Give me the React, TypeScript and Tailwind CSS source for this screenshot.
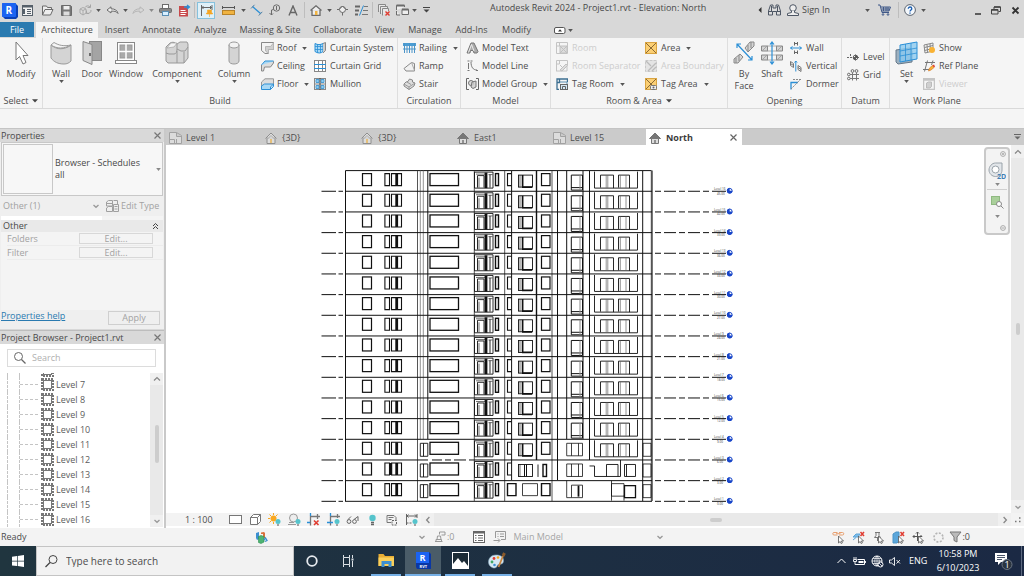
// App.tsx
import type { ReactNode } from "react";
import clsx from "clsx";

/* ---------- helpers ---------- */

const Svg = ({ w, h, children }: { w: number; h: number; children: ReactNode }) => (
  <svg
    width={w}
    height={h}
    viewBox={`0 0 ${w} ${h}`}
    fill="none"
    stroke="#6b6b6b"
    className="shrink-0"
    aria-hidden="true"
  >
    {children}
  </svg>
);

const Caret = ({ color = "#555" }: { color?: string }) => (
  <Svg w={5} h={3}>
    <path d="M0.2 0h4.6L2.5 3z" fill={color} stroke="none" />
  </Svg>
);

const WideCaret = ({ color = "#444" }: { color?: string }) => (
  <Svg w={6} h={4}>
    <path d="M0 .3h6L3 3.6z" fill={color} stroke="none" />
  </Svg>
);

const Chevron = ({ dir = "down" }: { dir?: "up" | "down" | "left" | "right" }) => (
  <Svg w={8} h={8}>
    {dir === "down" && <path d="M1.5 3l2.5 2.3L6.5 3" stroke="#999" strokeWidth="1.3" />}
    {dir === "up" && <path d="M1 5.4l3-2.8 3 2.8" stroke="#888" strokeWidth="1.3" />}
    {dir === "left" && <path d="M5.4 1l-2.8 3 2.8 3" stroke="#888" strokeWidth="1.3" />}
    {dir === "right" && <path d="M2.6 1l2.8 3-2.8 3" stroke="#888" strokeWidth="1.3" />}
  </Svg>
);

const CloseX = ({ color = "#666", bold }: { color?: string; bold?: boolean }) => (
  <Svg w={9} h={9}>
    <path d="M1.5 1.5l6 6M7.5 1.5l-6 6" stroke={color} strokeWidth={bold ? 1.8 : 1.2} />
  </Svg>
);

const Cell = ({ className, label, children }: { className: string; label: string; children: ReactNode }) => (
  <button
    type="button"
    aria-label={label}
    className={clsx("flex items-center justify-center shrink-0 h-full", className)}
  >
    {children}
  </button>
);

const Sep = () => (
  <span className="flex justify-center w-1 shrink-0">
    <span className="w-px h-4 bg-[#bdbdbd]" />
  </span>
);

/* ---------- title bar ---------- */

const RevitLogo = () => (
  <Svg w={17} h={17}>
    <path d="M2 1h12l3 3v11l-2 2H4l-3-3V2z" fill="#0b3fb5" stroke="none" />
    <rect x="1" y="1" width="14" height="14" rx="1" fill="#1b63f2" stroke="none" />
    <text x="4.5" y="12" fontSize="10" fontWeight="700" fill="#fff" stroke="none">R</text>
  </Svg>
);

const TitleBar = () => (
  <header className="flex items-center h-5 bg-[#d8d8d8] text-[9px] text-[#484848]">
    <Cell className="w-[18px]" label="Revit"><RevitLogo /></Cell>
    <Cell className="w-[19px]" label="Home">
      <Svg w={11} h={11}>
        <rect x="0.5" y="0.5" width="10" height="10" fill="#f2f2f2" stroke="#56606a" />
        <path d="M0 1.5h11M2 4v5" stroke="#56606a" strokeWidth="2" />
        <path d="M5 4.5h4M5 6.5h4M5 8.5h4" stroke="#56606a" />
      </Svg>
    </Cell>
    <Cell className="w-5" label="Open">
      <Svg w={13} h={11}>
        <path d="M1.5 10V1h4l1 1.5h4V4M1.5 10l2.5-5.5h8L9.5 10z" fill="#eee" />
      </Svg>
    </Cell>
    <Cell className="w-[19px]" label="Save">
      <Svg w={11} h={11}>
        <path d="M.5 .5h9l1 1v9H.5z" fill="#777" />
        <rect x="2.5" y="1" width="6" height="3.5" fill="#eee" stroke="none" />
        <rect x="2.5" y="6.5" width="6" height="4" fill="#ddd" stroke="none" />
      </Svg>
    </Cell>
    <Cell className="w-[18px]" label="Synchronize">
      <Svg w={13} h={12}>
        <path d="M1 5l3-1.5 3 1.5v4l-3 2-3-2zM1 5l3 1.5L7 5M4 6.5V11" fill="#ddd" stroke="#aaa" />
        <path d="M6 3.5A3 3 0 0 1 11 3M11.5 .5V3.5H8.500M12 6a3 3 0 0 1-4.500 3M7.500 6.500V9.500H10" stroke="#a5a5a5" />
      </Svg>
    </Cell>
    <Cell className="w-2" label="Synchronize options"><Caret /></Cell>
    <Cell className="w-5" label="Undo">
      <Svg w={13} h={9}>
        <path d="M5 .8L1 4l4 3V5.2c3-.2 5.5 0 7 2.3C11.5 4.5 9 2.8 5 2.8z" fill="#eee" />
      </Svg>
    </Cell>
    <Cell className="w-1.5" label="Undo list"><Caret /></Cell>
    <Cell className="w-5" label="Redo">
      <Svg w={13} h={9}>
        <path d="M8 .8L12 4 8 7V5.2c-3-.2-5.5 0-7 2.3C1.5 4.5 4 2.8 8 2.8z" stroke="#b5b5b5" />
      </Svg>
    </Cell>
    <Cell className="w-1.5" label="Redo list"><Caret color="#8a8a8a" /></Cell>
    <Cell className="w-[22px]" label="Print">
      <Svg w={13} h={12}>
        <rect x="3.5" y=".5" width="6" height="4" fill="#fff" />
        <rect x=".5" y="4.5" width="12" height="4" rx="1" fill="#888" />
        <rect x="3.5" y="7.5" width="6" height="4" fill="#d9efff" stroke="#5b8fb5" />
      </Svg>
    </Cell>
    <Cell className="w-4" label="Export PDF">
      <Svg w={13} h={13}>
        <rect x="1" y="2" width="9" height="10.5" fill="#c8494b" stroke="none" />
        <path d="M2.5 6.5h5M2.5 8.5h6M2.5 10.5h5" stroke="#fff" />
        <path d="M6 3h5M9 1l2.5 2L9 5" stroke="#2b8fd6" strokeWidth="1.3" />
      </Svg>
    </Cell>
    <Sep />
    <Cell className="w-5" label="Aligned dimension">
      <span className="flex items-center justify-center border w-[18px] h-[17px] border-[#86c1dd] bg-[#dff0f8]">
        <Svg w={13} h={13}>
          <path d="M1.5 1v11M12 1v5M1.500 3.500h10.500M3.500 2L2 3.500 3.500 5M10 2l1.500 1.500L10 5" stroke="#666" />
          <path d="M7.500 6h4v3h1v1h-6V9h1zM9.500 10v3" fill="#f5a623" stroke="#f5a623" strokeWidth=".6" />
        </Svg>
      </span>
    </Cell>
    <Cell className="w-6" label="Measure">
      <Svg w={13} h={9}>
        <path d="M1 1.5h11M.5 0v3M12.5 0v3" stroke="#555" />
        <rect x=".5" y="4.5" width="12" height="4" fill="#f0b341" stroke="#b8832a" />
      </Svg>
    </Cell>
    <Cell className="w-1.5" label="Measure options"><Caret /></Cell>
    <Cell className="w-5" label="Detail line">
      <Svg w={13} h={12}>
        <path d="M2.5 2.5l8 7" stroke="#2b8fd6" strokeWidth="1.3" />
        <path d="M1 4.5L4.5 .8M8.8 11.5l3.500-3.700" stroke="#4f7fa3" />
      </Svg>
    </Cell>
    <Cell className="w-[18px]" label="Tag by category">
      <Svg w={12} h={12}>
        <circle cx="7.5" cy="4" r="3.2" />
        <path d="M7.5 2v4M4.500 5.500L2.500 6v5M.5 9l2 2 1.500-1.500" />
      </Svg>
    </Cell>
    <Cell className="w-[18px]" label="Text">
      <Svg w={10} h={11}>
        <path d="M1 10.5L5 1l4 9.500M2.500 7.500h5" stroke="#666" strokeWidth="1.4" />
      </Svg>
    </Cell>
    <Sep />
    <Cell className="w-5" label="Default 3D view">
      <Svg w={12} h={11}>
        <path d="M.5 5.5L6 .8l5.500 4.700M2 5v5.500h8V5" fill="#eee" strokeWidth="1.3" />
        <rect x="5" y="6" width="2.5" height="4" fill="#f0b341" stroke="none" />
      </Svg>
    </Cell>
    <Cell className="w-1.5" label="View options"><Caret /></Cell>
    <Cell className="w-5" label="Section">
      <Svg w={11} h={11}>
        <circle cx="5.5" cy="4.5" r="3" fill="#eee" />
        <path d="M0 4.5h2L5.5 1 9 4.500h2M5.500 7.500v3" />
      </Svg>
    </Cell>
    <Cell className="w-[18px]" label="Thin lines">
      <Svg w={13} h={11}>
        <path d="M0 1.5h5M0 5.5h4M0 9.5h3" strokeWidth="2" stroke="#666" />
        <path d="M9 1.5h4M8 5.5h5M7 9.5h6" stroke="#777" />
        <path d="M8.5 .5l-4 10" stroke="#2b8fd6" />
      </Svg>
    </Cell>
    <Sep />
    <Cell className="w-5" label="Close inactive views">
      <Svg w={12} h={12}>
        <path d="M.5 8V.5h7V2M2.5 10V2.5h7V5M4.5 11.5v-7h6V7" fill="#e8e8e8" stroke="#888" />
        <path d="M7.500 7.500l4 4M11.500 7.500l-4 4" stroke="#e03c31" strokeWidth="1.4" />
      </Svg>
    </Cell>
    <Cell className="w-4" label="Switch windows">
      <Svg w={13} h={12}>
        <path d="M.5 6V1.5h8V3M.5 7v4H4M6 5.5h6.500v5H6z" fill="#eee" />
        <path d="M.5 1.500h8M6 5.500h6.500" strokeWidth="2" />
      </Svg>
    </Cell>
    <Cell className="w-2" label="Window list"><Caret /></Cell>
    <Cell className="w-4" label="Customize toolbar">
      <Svg w={7} h={6}>
        <path d="M0 .5h7" stroke="#444" />
        <path d="M.5 2.5h6l-3 3z" fill="#444" stroke="none" />
      </Svg>
    </Cell>
    <h1 className="ml-14 -mt-1 whitespace-nowrap">Autodesk Revit 2024 - Project1.rvt - Elevation: North</h1>

    <div className="flex items-center h-full ml-auto">
      <Cell className="w-2" label="Collapse">
        <Svg w={4} h={6}><path d="M3.5 0v6L.5 3z" fill="#333" stroke="none" /></Svg>
      </Cell>
      <Cell className="w-5" label="Find">
        <Svg w={13} h={12}>
          <path d="M2.500 1h2.500v3h3V1h2.500l2 6v4h-4V7.500h-4V11h-4V7z" fill="#ddd" stroke="#4d5664" />
          <path d="M.5 7.500h4M8.500 7.500h4M3.500 2v5M9.500 2v5" stroke="#4d5664" />
        </Svg>
      </Cell>
      <button type="button" className="flex items-center h-full">
        <span className="flex justify-center w-[18px]">
          <Svg w={12} h={12}>
            <circle cx="6" cy="4" r="3.3" fill="#eee" stroke="#4d5664" />
            <path d="M4.5 7v1.5L.5 9.500v2h11v-2l-4-1V7" fill="#eee" stroke="#4d5664" />
          </Svg>
        </span>
        <span className="text-left w-[60px]">Sign In</span>
      </button>
      <Cell className="w-2.5" label="Account"><Caret /></Cell>
      <Cell className="w-6" label="App store">
        <Svg w={13} h={12}>
          <path d="M0 1h2l2 7.500h7M2.800 3h9.700L11 7H4M3.500 5h8M5.500 3v4M8 3v4M10 3v4" stroke="#3f5888" />
          <circle cx="5" cy="10.5" r=".8" stroke="#3f5888" />
          <circle cx="10" cy="10.5" r=".8" stroke="#3f5888" />
        </Svg>
      </Cell>
      <Sep />
      <Cell className="w-5" label="Help">
        <Svg w={12} h={12}>
          <circle cx="6" cy="6" r="5.4" fill="#f4f8fc" stroke="#5d6570" />
          <path d="M4.300 4.700c0-2.300 3.500-2.200 3.500 0C7.800 6 6 6 6 7.500M6 8.500v1.200" stroke="#1d5fb0" strokeWidth="1.3" />
        </Svg>
      </Cell>
      <Cell className="w-1.5" label="Help options"><Caret /></Cell>
      <Cell className="w-4 ml-11" label="Minimize">
        <Svg w={7} h={9}><path d="M0 8h6" stroke="#333" strokeWidth="1.5" /></Svg>
      </Cell>
      <Cell className="w-5" label="Restore">
        <Svg w={10} h={9}>
          <path d="M3 3V1h6.500v4.500H7.500M.5 3.500H7v4.500H.5z" stroke="#444" />
          <path d="M3 1h6.500M.5 4H7" stroke="#444" strokeWidth="1.5" />
        </Svg>
      </Cell>
      <Cell className="w-[18px]" label="Close"><CloseX color="#333" bold /></Cell>
    </div>
  </header>
);

/* ---------- ribbon tabs ---------- */

const ribbonTabs = [
  { name: "Insert", width: "w-[38px]" },
  { name: "Annotate", width: "w-[51px]" },
  { name: "Analyze", width: "w-[47px]" },
  { name: "Massing & Site", width: "w-[72px]" },
  { name: "Collaborate", width: "w-[63px]" },
  { name: "View", width: "w-[31px]" },
  { name: "Manage", width: "w-[50px]" },
  { name: "Add-Ins", width: "w-[43px]" },
  { name: "Modify", width: "w-[47px]" },
];

const RibbonTabs = () => (
  <nav className="flex h-[17px] pt-px mt-px bg-[#d8d8d8] text-[9px] text-[#4c4c4c]">
    <button type="button" className="w-[34px] h-[15px] bg-[#2a7ab0] text-white">File</button>
    <button type="button" className="ml-0.5 w-[62px] h-4 bg-[#f5f5f5]">Architecture</button>
    {ribbonTabs.map((tab) => (
      <button key={tab.name} type="button" className={clsx("whitespace-nowrap shrink-0 h-4 flex items-center justify-center", tab.width)}>
        {tab.name}
      </button>
    ))}
    <button type="button" aria-label="Ribbon display" className="flex gap-0.5 items-center ml-[14px]">
      <Svg w={12} h={7}>
        <rect x=".5" y=".5" width="10.5" height="6" rx="1.5" fill="#fff" stroke="#555" />
        <path d="M4 4.5h4L6 2.3z" fill="#333" stroke="none" />
      </Svg>
      <Caret />
    </button>
  </nav>
);

/* ---------- ribbon icons ---------- */

const G = "#d4d4d4";
const B = "#2b8fd6";

const largeIcons: Record<string, ReactNode> = {
  modify: (
    <Svg w={22} h={24}>
      <path d="M6 1v18l3.500-3.500L13 23l3-1.500-3-7h5z" fill="#fff" stroke="#777" />
    </Svg>
  ),
  wall: (
    <Svg w={22} h={24}>
      <path d="M1 4c5 4 10 5 17 2l3-2v16c-2 2-4 3-7 3-6 0-10-2-13-6z" fill={G} stroke="#999" />
      <path d="M1 4l3-2.500c5 3 10 4 17 2.500-7 4-14 4-20 0z" fill="#f5f5f5" stroke="#999" />
    </Svg>
  ),
  door: (
    <Svg w={20} h={24}>
      <rect x="7.5" y=".5" width="12" height="19" fill="#a4a4a4" stroke="#888" />
      <path d="M1 .5l9 3v20l-9-4z" fill={G} stroke="#888" />
      <path d="M8 12v3" stroke="#333" strokeWidth="1.3" />
    </Svg>
  ),
  window: (
    <Svg w={22} h={24}>
      <rect x="2.5" y="1.5" width="17" height="18" fill="#fff" stroke="#888" />
      <rect x="5" y="4" width="12" height="13" fill="#aaa" stroke="#999" />
      <path d="M11 3v15M4 10.500h14" stroke="#fff" strokeWidth="1.5" />
      <rect x=".5" y="19.5" width="21" height="3" fill="#fff" stroke="#888" />
    </Svg>
  ),
  component: (
    <Svg w={24} h={24}>
      <path d="M1 13V6l4-4c2-1 4-1 5 0l2 1 3-2h7l1 2v14l-4 5H3l-2-2z" fill={G} stroke="#999" />
      <path d="M1 12l3 1h5c2 0 3-2 3-5V3M12 10v12M12 8l4 2h4l3-4M19 22V11" stroke="#999" />
      <path d="M2 7l4-5h6l-3 4z" fill="#f4f4f4" stroke="#999" strokeWidth=".6" />
    </Svg>
  ),
  column: (
    <Svg w={12} h={24}>
      <path d="M1 4v16c0 4 10 4 10 0V4" fill={G} stroke="#999" />
      <ellipse cx="6" cy="4" rx="5" ry="3" fill="#f2f2f2" stroke="#999" />
    </Svg>
  ),
  byFace: (
    <Svg w={22} h={24}>
      <path d="M1 18l6-5 3 3-5 6H1zM12 7l5-6h4v4l-6 6z" fill={G} stroke="#888" />
      <path d="M3 17v5M6 14v6M15 4v6M18 1v6" stroke="#888" />
      <path d="M4 3l15 16M4 7V3h4M15 19h4v-4" stroke={B} strokeWidth="1.2" />
    </Svg>
  ),
  shaft: (
    <Svg w={22} h={24}>
      <path d="M.5 5h6v5h-6zM15.500 5h6v5h-6zM.5 14h6v5h-6zM15.500 14h6v5h-6z" fill={G} stroke="#888" />
      <path d="M1 10l5-5M16 10l5-5M1 19l5-5M16 19l5-5M6 5h10M6 10h10M6 14h10M6 19h10" stroke="#999" strokeWidth=".8" />
      <path d="M11 1v22M9 3.500L11 1l2 2.500M9 20.500L11 23l2-2.500" stroke={B} strokeWidth="1.2" />
    </Svg>
  ),
  set: (
    <Svg w={24} h={24}>
      <path d="M1 9l14-2 2 3v11L3 23l-2-2z" fill="#9bb0c0" stroke="#66798a" />
      <path d="M5 4l17-3v17L5 21z" fill="#8ccbf0" fillOpacity=".8" stroke={B} />
      <path d="M10.5 3v17M16 2v17M5 10l17-3M5 15l17-3" stroke={B} strokeWidth=".8" />
    </Svg>
  ),
};

const smallIcons: Record<string, ReactNode> = {
  roof: (
    <Svg w={13} h={12}>
      <path d="M.5 .5h12v7h-5v4H4L.5 8.500z" fill="#f3f3f3" stroke="#888" />
      <path d="M12.500 1v6.500h-5v4L4.500 9V4.500h5z" fill="#cfcfcf" stroke="#b5b5b5" />
    </Svg>
  ),
  ceiling: (
    <Svg w={13} h={12}>
      <path d="M.5 5L4 1h8.500L10 5.500H.5z" fill="#a8d8f5" stroke={B} />
      <path d="M.5 5v6h2l1-4h6l3-4V1.500" fill="#ddd" stroke="#888" />
    </Svg>
  ),
  floor: (
    <Svg w={13} h={12}>
      <path d="M.5 8V4L4 .8h8.500V8" fill="#ddd" stroke="#999" />
      <path d="M.5 8l3-2h9l-3 3v2.500h-9zM9.500 11.500l3-3V6" fill="#a8d8f5" stroke={B} />
    </Svg>
  ),
  curtainSystem: (
    <Svg w={13} h={12}>
      <path d="M1 1.500c3 1.500 5 1.500 8 0v8c-2 2-5 2-8 0z" fill="#a8d8f5" stroke={B} />
      <path d="M3.500 2v9M6.500 2v9M1 4.500h8M1 7.500h8" stroke={B} strokeWidth=".8" />
      <path d="M9 1.500l2.500-1v8L9 11" fill="#ccc" stroke="#888" />
    </Svg>
  ),
  curtainGrid: (
    <Svg w={12} h={12}>
      <rect x=".5" y=".5" width="11" height="11" fill="#fff" stroke="#888" />
      <path d="M4.500 1v10M8.500 1v10" stroke="#888" />
      <path d="M0 4.500h12M0 8.500h12" stroke={B} />
    </Svg>
  ),
  mullion: (
    <Svg w={12} h={12}>
      <path d="M.5 .5v11M11.500 .5v11M0 .5h12M0 11.500h12M0 6h12" stroke="#888" />
      <path d="M2 1.500h3v3H2zM7 1.500h3v3H7zM2 7.500h3v3H2zM7 7.500h3v3H7z" fill="#8ccbf0" stroke="#4b9cd3" />
      <path d="M6 0v12" stroke="#444" />
    </Svg>
  ),
  railing: (
    <Svg w={13} h={12}>
      <rect x="0" y="1" width="13" height="3" fill="#4b9cd3" stroke="none" />
      <path d="M1.500 1v10M4 4v7M6.500 1v10M9 4v7M11.500 1v10M0 7h13" stroke="#4b94c8" />
    </Svg>
  ),
  ramp: (
    <Svg w={13} h={12}>
      <path d="M1 8.500l7.500-6 3 1v7.500H3z" fill="#f1f1f1" stroke="#888" />
      <path d="M8.500 2.500l3 8" stroke="#aaa" />
    </Svg>
  ),
  stair: (
    <Svg w={13} h={12}>
      <path d="M1 6l2-2 2-.5 1.500-2.500 3 1v2l2.500 1-1 3-5 3.500L1 8z" fill="#ddd" stroke="#888" />
      <path d="M1 6l5 3 6-4M6 9v2.500M4 4l4 2.500" stroke="#999" />
    </Svg>
  ),
  modelText: (
    <Svg w={13} h={12}>
      <path d="M1 11L5 1h3l4 8.500-1 1.500H8L7 8.500H4.500L4 11z" fill="#aaa" stroke="#777" />
      <path d="M2.500 10.500L5.500 2.500 8 9" stroke="#eee" />
    </Svg>
  ),
  modelLine: (
    <Svg w={13} h={12}>
      <path d="M2.500 3v6M5 2c0 5 2 8 6 8" stroke="#777" />
      <path d="M1.500 1h2M1.500 10.500h2M4.500 1h2M10 10.500h2" stroke="#777" />
    </Svg>
  ),
  modelGroup: (
    <Svg w={13} h={12}>
      <path d="M3 .5H.5v11H3M10 .5h2.500v11H10" stroke="#666" />
      <circle cx="5" cy="5" r="2.5" fill="#ddd" stroke="#777" />
      <path d="M5 9l1-5 4-1v6l-3 1.500z" fill="#ccc" fillOpacity=".8" stroke="#777" />
    </Svg>
  ),
  room: (
    <Svg w={12} h={12}>
      <path d="M.5 11.500V.5h11v11zM.5 4h3V.5" stroke="#c4c4c4" />
      <path d="M4 4h7v7H4zM4 4l7 7M11 4l-7 7" fill="#ddd" stroke="#c0c0c0" />
    </Svg>
  ),
  roomSep: (
    <Svg w={12} h={12}>
      <path d="M.5 11.500V.5h11v5M.5 4h3V.5M11 6v5H1" stroke="#c4c4c4" />
      <path d="M4 10l6-6 1.500 1.500L6 11zM4 5l3 3" fill="#ddd" stroke="#c0c0c0" />
    </Svg>
  ),
  tagRoom: (
    <Svg w={12} h={12}>
      <path d="M1 11.500V1h10.500v3M.5 4.500h3V1M.5 11.500H3" stroke="#3d6f91" strokeWidth="1.3" />
      <path d="M4 4h7v2" stroke="#5d8fb1" />
      <rect x="4.500" y="6.500" width="7" height="5" fill="#d2e6f3" stroke="#666" />
      <path d="M6.500 11.500V8.500h3v3" stroke="#666" />
    </Svg>
  ),
  area: (
    <Svg w={12} h={12}>
      <rect x=".5" y=".5" width="11" height="11" fill="#fbcf74" stroke="#d9a441" />
      <path d="M1 1l10 10M11 1L1 11" stroke="#8a6a35" />
    </Svg>
  ),
  areaBoundary: (
    <Svg w={12} h={12}>
      <rect x=".5" y=".5" width="11" height="11" fill="#e4e4e4" stroke="#c8c8c8" strokeDasharray="3 1" />
      <path d="M1 1l5 5M11 3l-8 8M7 11l4-4" stroke="#bbb" strokeWidth="1.3" />
    </Svg>
  ),
  tagArea: (
    <Svg w={12} h={12}>
      <rect x=".5" y=".5" width="11" height="11" fill="#fbcf74" stroke="#d9a441" />
      <path d="M1 1l6 6M11 1L1 11" stroke="#8a6a35" />
      <rect x="5.500" y="7.500" width="6" height="4" rx="1" fill="#eee" stroke="#777" />
      <circle cx="8.500" cy="9.500" r="1" fill="#666" stroke="none" />
    </Svg>
  ),
  opWall: (
    <Svg w={12} h={12}>
      <path d="M4.500 0v3.500M7.500 0v3.500M4.500 1.500h3M4.500 8.500V12M7.500 8.500V12M4.500 10.500h3" stroke="#666" />
      <path d="M.5 6h11M2.500 4.500L.5 6l2 1.500M9.500 4.500l2 1.500-2 1.500" stroke={B} />
    </Svg>
  ),
  opVertical: (
    <Svg w={12} h={12}>
      <path d="M.5 1.500l3 2v4l-3-2zM8 5.500l3 2v4l-3-2zM.5 3.500l3 2M8 7.500l3 2" stroke="#777" />
      <path d="M5.800 1v10.500M4.500 2.500L5.800 1l1.300 1.500" stroke={B} />
    </Svg>
  ),
  opDormer: (
    <Svg w={12} h={12}>
      <path d="M1 11.500v-7h7" stroke={B} strokeWidth="1.3" />
      <path d="M1 11l10-10M3 1.500h9" stroke="#888" strokeDasharray="2 1" />
    </Svg>
  ),
  level: (
    <Svg w={12} h={12}>
      <path d="M0 6.500h6" stroke="#666" strokeDasharray="2 1" />
      <circle cx="8.500" cy="6.500" r="2.3" stroke="#666" />
      <path d="M8.500 3.500v6M6 6.500h6M3.500 3v2" stroke="#666" />
      <path d="M8.500 6.500V4.200a2.300 2.300 0 0 1 2.300 2.300zM8.500 6.500v2.300a2.300 2.300 0 0 1-2.300-2.300z" fill="#555" stroke="none" />
    </Svg>
  ),
  grid: (
    <Svg w={12} h={12}>
      <circle cx="5.500" cy="2" r="1.4" />
      <circle cx="9.500" cy="2" r="1.4" />
      <circle cx="1.800" cy="5.500" r="1.3" />
      <circle cx="1.800" cy="9.500" r="1.3" />
      <path d="M5.500 3.500v8M9.500 3.500v8M3 5.500h9M3 9.500h9" stroke="#777" />
    </Svg>
  ),
  show: (
    <Svg w={12} h={12}>
      <path d="M1 3l9-2v8l-8 2zM4 2.500l.5 8M7 2l.5 7.500M1.500 5.500l8.500-2M1.500 8.500l8.500-2" stroke="#888" />
      <circle cx="9" cy="8" r="3" fill="#f9b233" stroke="none" />
    </Svg>
  ),
  refPlane: (
    <Svg w={12} h={12}>
      <path d="M2 2.500h10M0 9.500h6M4.500 .5l-3 11M10 .5L8.500 5" stroke="#777" />
      <path d="M5.500 11l1-3 3-2.500 1.500 2-3 2.500z" fill="#f9b233" stroke="#d87d2a" strokeWidth=".7" />
      <path d="M9.500 5.500l1.500 2 1-1-1-2z" fill="#e03c31" stroke="none" />
    </Svg>
  ),
  viewer: (
    <Svg w={12} h={12}>
      <path d="M.5 .5h11v11H.5zM.5 2h11" stroke="#c4c4c4" strokeWidth="1.5" />
      <path d="M3.500 5l2-1h3v4.500L7 10H3.500z" fill="#d0d0d0" stroke="#bbb" />
    </Svg>
  ),
};

/* ---------- ribbon ---------- */

const BigButton = ({
  icon,
  label,
  width,
  caret,
}: {
  icon: string;
  label: string;
  width: string;
  caret?: boolean;
}) => (
  <button type="button" className={clsx("flex flex-col items-center pt-[3px] shrink-0", width)}>
    {largeIcons[icon]}
    <span className="leading-[12px] mt-[3px] text-center">{label}</span>
    {caret && <span><Caret /></span>}
  </button>
);

interface SmallItem {
  icon: string;
  label: string;
  caret?: boolean;
  disabled?: boolean;
}

const SmallColumn = ({ items, width }: { items: SmallItem[]; width?: string }) => (
  <div className={clsx("flex flex-col justify-center shrink-0", width)}>
    {items.map((item) => (
      <button
        key={item.icon}
        type="button"
        disabled={item.disabled}
        className="flex items-center h-[18px] whitespace-nowrap disabled:text-[#cdcdcd]"
      >
        <span className="w-4 shrink-0">{smallIcons[item.icon]}</span>
        <span>{item.label}</span>
        {item.caret && <span className="ml-1.5"><Caret /></span>}
      </button>
    ))}
  </div>
);

const Panel = ({
  title,
  width,
  caret,
  last,
  children,
}: {
  title: string;
  width: string;
  caret?: boolean;
  last?: boolean;
  children: ReactNode;
}) => (
  <section className={clsx("flex flex-col shrink-0 border-[#dedede]", !last && "border-r", width)}>
    <div className="flex h-14">{children}</div>
    <h2 className="flex gap-1 justify-center items-center h-[14px]">
      {title}
      {caret && <WideCaret />}
    </h2>
  </section>
);

const Ribbon = () => (
  <div className="flex h-[71px] border-b border-[#d9d9d9] bg-[#f5f5f5] text-[9px] text-[#4c4c4c]">
    <Panel title="Select" width="w-[43px]" caret>
      <BigButton icon="modify" label="Modify" width="w-[42px]" />
    </Panel>
    <Panel title="Build" width="w-[355px]">
      <BigButton icon="wall" label="Wall" width="w-9" caret />
      <BigButton icon="door" label="Door" width="w-[26px]" />
      <BigButton icon="window" label="Window" width="w-[42px]" />
      <BigButton icon="component" label="Component" width="w-[60px]" caret />
      <BigButton icon="column" label="Column" width="w-[54px]" caret />
      <SmallColumn
        width="w-[53px]"
        items={[
          { icon: "roof", label: "Roof", caret: true },
          { icon: "ceiling", label: "Ceiling" },
          { icon: "floor", label: "Floor", caret: true },
        ]}
      />
      <SmallColumn
        items={[
          { icon: "curtainSystem", label: "Curtain System" },
          { icon: "curtainGrid", label: "Curtain Grid" },
          { icon: "mullion", label: "Mullion" },
        ]}
      />
    </Panel>
    <Panel title="Circulation" width="w-[63px]">
      <SmallColumn
        width="pl-[5px]"
        items={[
          { icon: "railing", label: "Railing", caret: true },
          { icon: "ramp", label: "Ramp" },
          { icon: "stair", label: "Stair" },
        ]}
      />
    </Panel>
    <Panel title="Model" width="w-[90px]">
      <SmallColumn
        width="pl-[5px]"
        items={[
          { icon: "modelText", label: "Model Text" },
          { icon: "modelLine", label: "Model Line" },
          { icon: "modelGroup", label: "Model Group", caret: true },
        ]}
      />
    </Panel>
    <Panel title="Room & Area" width="w-[177px]" caret>
      <SmallColumn
        width="pl-[5px] w-[94px]"
        items={[
          { icon: "room", label: "Room", disabled: true },
          { icon: "roomSep", label: "Room Separator", disabled: true },
          { icon: "tagRoom", label: "Tag Room", caret: true },
        ]}
      />
      <SmallColumn
        items={[
          { icon: "area", label: "Area", caret: true },
          { icon: "areaBoundary", label: "Area Boundary", disabled: true },
          { icon: "tagArea", label: "Tag Area", caret: true },
        ]}
      />
    </Panel>
    <Panel title="Opening" width="w-[114px]">
      <BigButton icon="byFace" label="By Face" width="w-8 px-1" />
      <BigButton icon="shaft" label="Shaft" width="w-6" />
      <SmallColumn
        width="pl-1.5"
        items={[
          { icon: "opWall", label: "Wall" },
          { icon: "opVertical", label: "Vertical" },
          { icon: "opDormer", label: "Dormer" },
        ]}
      />
    </Panel>
    <Panel title="Datum" width="w-12">
      <SmallColumn
        width="pl-[5px]"
        items={[
          { icon: "level", label: "Level" },
          { icon: "grid", label: "Grid" },
        ]}
      />
    </Panel>
    <Panel title="Work Plane" width="w-[94px]" last>
      <BigButton icon="set" label="Set" width="w-[33px]" caret />
      <SmallColumn
        items={[
          { icon: "show", label: "Show" },
          { icon: "refPlane", label: "Ref Plane" },
          { icon: "viewer", label: "Viewer", disabled: true },
        ]}
      />
    </Panel>
  </div>
);

/* ---------- left side: palettes ---------- */

const PaletteHeader = ({ title }: { title: string }) => (
  <div className="flex justify-between items-center pl-px pr-0.5 h-[13px] bg-[#d9d9d9] text-[#484848]">
    <h2>{title}</h2>
    <button type="button" aria-label={`Close ${title}`}><CloseX color="#777" /></button>
  </div>
);

const PropertyRow = ({ name }: { name: string }) => (
  <div className="flex items-center h-[14px] border-b border-[#ececec]">
    <span className="w-[72px]">{name}</span>
    <button type="button" disabled aria-label={`Edit ${name}`} className="w-[74px] h-[11px] leading-[9px] border border-[#d8d8d8]">
      Edit...
    </button>
  </div>
);

const Properties = () => (
  <section className="flex flex-col h-[200px] bg-[#efefef] text-[9px] text-[#a2a2a2]">
    <PaletteHeader title="Properties" />
    <button
      type="button"
      className="flex items-center p-px mx-px h-[54px] text-left border border-[#c8c8c8] bg-[#f7f7f7] text-[#484848]"
    >
      <span className="w-[50px] h-[50px] border border-[#c8c8c8]" />
      <span className="ml-0.5 w-24 leading-[12px]">Browser - Schedules all</span>
      <span className="ml-auto"><Caret color="#888" /></span>
    </button>
    <div className="flex items-center h-5">
      <button type="button" disabled className="flex justify-between items-center pr-0.5 pl-[3px] w-[102px]">
        Other (1)
        <Chevron />
      </button>
      <button type="button" disabled className="flex gap-0.5 items-center ml-1">
        <Svg w={13} h={12}>
          <path d="M.5 2l2-1.500h4V6h-6zM.5 8l2-1.500h4v5h-6zM7.500 .5h4v4M7.500 4.500h5v7h-5zM8.500 6.500h3M8.500 9h3M.5 3.500h6" stroke="#a0a0a0" />
        </Svg>
        Edit Type
      </button>
    </div>
    <div className="flex-1 mx-px bg-[#f4f4f4]">
      <div className="w-[101px] h-1 bg-white" />
      <div className="flex justify-between items-center pl-0.5 pr-1 h-3 bg-[#e9e9e9] text-[#484848]">
        Other
        <Svg w={7} h={8}>
          <path d="M1 4l2.500-2.500L6 4M1 7l2.500-2.500L6 7" stroke="#444" />
        </Svg>
      </div>
      <div className="pl-[6px]">
        <PropertyRow name="Folders" />
        <PropertyRow name="Filter" />
      </div>
    </div>
    <div className="flex justify-between items-start pl-px pr-1 h-[19px]">
      <a href="#help" className="underline text-[#2a7ab0]">Properties help</a>
      <button type="button" disabled className="mt-px w-[52px] h-[14px] leading-[12px] border border-[#cfcfcf]">
        Apply
      </button>
    </div>
  </section>
);

const TreeGuides = () => (
  <>
    <span className="w-3 h-full ml-[7px] border-l border-dashed border-[#c4c4c4]" />
    <span className="h-full border-l border-dashed border-[#c4c4c4]" />
  </>
);

const PlanIcon = () => (
  <Svg w={13} h={13}>
    <rect x="1" y="1" width="11" height="11" stroke="#777" strokeWidth="2" strokeDasharray="2 1" />
    <rect x="2.500" y="2.500" width="8" height="8" fill="#fff" stroke="#777" />
  </Svg>
);

const levels = [7, 8, 9, 10, 11, 12, 13, 14, 15, 16];

const ProjectBrowser = () => (
  <section className="flex flex-col flex-1 mt-px border-t border-[#bdbdbd] bg-white text-[9px] text-[#5c5c5c]">
    <PaletteHeader title="Project Browser - Project1.rvt" />
    <label className="flex gap-1.5 items-center px-1.5 mt-[5px] mr-2 ml-[7px] h-[18px] border border-[#dcdcdc]">
      <Svg w={12} h={12}>
        <circle cx="4.500" cy="4.500" r="4" stroke="#666" />
        <path d="M7.500 7.500l4 4" stroke="#666" strokeWidth="1.3" />
      </Svg>
      <input type="text" aria-label="Search project browser" placeholder="Search" className="w-full outline-none placeholder:text-[#b0b0b0]" />
    </label>
    <div className="flex mt-1.5 h-[154px]">
      <div className="flex flex-col flex-1">
        {/* tail of the row scrolled out of view */}
        <div className="flex overflow-hidden items-end h-1">
          <TreeGuides />
          <span className="ml-[21px]"><PlanIcon /></span>
        </div>
        <ul>
          {levels.map((level) => (
            <li key={level} className="flex items-center h-[15px]">
              <TreeGuides />
              <span className="w-[18px] border-t border-dashed border-[#c4c4c4]" />
              <span className="ml-[3px]"><PlanIcon /></span>
              <span className="ml-0.5">Level {level}</span>
            </li>
          ))}
        </ul>
      </div>
      <div className="flex flex-col items-center w-[13px] mr-px bg-[#e9e9e9]">
        <span className="flex justify-center items-center w-full h-3 bg-[#f0f0f0]"><Chevron dir="up" /></span>
        <span className="mt-10 w-1 h-[38px] rounded-sm bg-[#cdcdcd]" />
        <span className="flex justify-center items-center mt-auto w-full h-3 bg-[#f0f0f0]"><Chevron /></span>
      </div>
    </div>
  </section>
);

/* ---------- elevation drawing ---------- */

const FLOORS = 16;
const TOP = 170.6;
const STEP = 20.67;

// one storey, drawn with its top edge at y = 0
const Storey = ({ index }: { index: number }) => {
  const typical = index < 13;
  return (
    <g transform={`translate(0 ${TOP + index * STEP})`}>
      <rect x="362.5" y="3" width="9" height="12" strokeWidth="1.2" />
      <path d="M384.9 3h4.600v12h-4.600zM391.500 3h10v12h-10z" strokeWidth="1.1" />
      <path d="M396.700 3v12" strokeWidth="2.8" />
      {index === 14 && <path d="M391 3v12" strokeWidth="2.4" />}
      <rect x="430" y="3" width="28.5" height="12" strokeWidth="1.3" />
      <path d="M474.500 1.500h18.500v16h-18.500zM477.500 17V5h6.500v12M490 4v13" strokeWidth=".9" />
      <path d="M486 2v15.500" strokeWidth="2.8" />
      <path d="M488.500 4h4M476 3.500h9M479 7v10" strokeWidth=".6" />
      <rect x="495.500" y="3" width="3" height="12" strokeWidth="1.4" />

      {index < 15 && (
        <>
          <path d="M511.500 3h-4v12h4" strokeWidth="1.1" />
          <rect x="518.500" y="4.500" width="14" height="12" strokeWidth=".9" />
          {index === 14 ? (
            <path d="M524.500 4.500v12M526.500 4.500v12" />
          ) : (
            <path d="M522.600 4.500v12M522 16.500h10" strokeWidth="1.7" />
          )}
          <path d="M520 4.500v12" strokeWidth=".6" />
        </>
      )}
      {index < 14 && <rect x="541.500" y="3" width="8.5" height="12" strokeWidth="1.2" />}

      {typical && (
        <>
          <path d="M420.300 0v20.600M423.300 0v20.600" stroke="#777" strokeWidth=".8" />
          <path d="M571.300 4.500h11.200v15h-11.200zM571 17h11.500" />
          <path d="M580 4.500v15" stroke="#888" />
        </>
      )}
      {!typical && (
        <>
          <path d="M420.300 4h7.500v13h-7.500zM423.500 4v13" strokeWidth=".9" />
          <path d="M643 4h8v13h-8z" strokeWidth=".8" />
        </>
      )}
      {(index === 13 || index === 14) && (
        <path d="M566.700 4h15.800v12.500h-15.800zM571.500 4v12.500M578.500 4v12.500" strokeWidth=".8" />
      )}
      {index < 14 && (
        <>
          <path d="M594.500 1v16.500h43V1M600.500 17V4.500h13v13M618.500 17V4.500h11v13" strokeWidth=".9" />
          <path d="M606.200 4.500v13M607.800 4.500v13M620.300 4.500v13M626 4.500v13" stroke="#666" strokeWidth=".7" />
        </>
      )}
      {index === 14 && (
        <>
          <rect x="543" y="4.500" width="3.5" height="12" strokeWidth="1.4" />
          <path d="M538 17V4.500M589.500 6h5v10.500h26V0M606.500 16.500v-12h11.500v12M624.500 4.500h11v12h-11zM626.500 4.500v12" strokeWidth=".9" />
        </>
      )}
      {index === 15 && (
        <>
          <path d="M507.500 3h8.500v12h-8.500zM541.500 3h8.500v12h-8.500z" strokeWidth="1.4" />
          <path d="M522.500 3h15v12h-15zM566.700 0v17h4.800M571.500 4.500h11v12.500h-11zM611.500 3h12.500v12.500h-12.500zM611.500 0v20M624 15v5" strokeWidth=".8" />
          <path d="M578.500 5v11" strokeWidth="1.8" />
          <rect x="624.500" y="5" width="11" height="12" strokeWidth="1.3" />
        </>
      )}
    </g>
  );
};

const Elevation = () => {
  const floors = Array.from({ length: FLOORS }, (_, i) => i);
  return (
    <svg width="414" height="338" viewBox="321 168 414 338" fill="none" stroke="#111" role="img" aria-label="North elevation">
      {/* outline and full height lines */}
      <path d="M345.500 501V170.600H651.500" />
      <path d="M651.800 170.600V501" stroke="#555" strokeWidth="2" />
      <path d="M417.500 171v330M504.700 171v330M552 171v330M474.300 171v330" stroke="#555" />
      <path d="M427.800 171v268M511.600 171v309M557.500 171v309M566.700 171v268M583 171v268M589.500 171v289M642.700 171v330" />
      <path d="M536.500 171v289" strokeWidth="1.4" />
      {floors.map((i) => (
        <Storey key={i} index={i} />
      ))}

      {/* levels, top to bottom */}
      {floors.map((i) => {
        const y = TOP + (i + 1) * STEP;
        const no = FLOORS - i;
        return (
          <g key={i}>
            <path d={`M321.500 ${y}h14.500M338.500 ${y}h4.500`} />
            {i === 13 ? (
              <path d={`M345 ${y}h83M432 ${y}h10M445 ${y}h6M454 ${y}h12M469 ${y}h183`} />
            ) : (
              <path d={`M345 ${y}h307`} />
            )}
            <path d={`M655 ${y}h55`} strokeDasharray="12 3 6 3" strokeDashoffset="15" />
            <path d={`M712 ${y}h14`} />
            <text x="714" y={y - 1} fontSize="3" fill="#333" stroke="none">Level {no}</text>
            <text x="717" y={y + 3.5} fontSize="3" fill="#333" stroke="none">{((no - 1) * 3).toFixed(2)}</text>
            <circle cx="729.7" cy={y - 0.5} r="2.4" fill="#fff" stroke="#1846c9" />
            <path
              d={`M729.700 ${y - 0.5}v2.800a2.800 2.800 0 0 1-2.800-2.800zM729.700 ${y - 0.5}v-2.800a2.800 2.800 0 0 0-2.800 2.800zM729.700 ${y - 0.5}v2.800a2.800 2.800 0 0 0 2.800-2.800z`}
              fill="#1846c9"
              stroke="none"
            />
          </g>
        );
      })}
    </svg>
  );
};

/* ---------- view area ---------- */

const SheetIcon = () => (
  <Svg w={13} h={12}>
    <path d="M.5 .5h7l5 3v8H.5zM7.500 .5v4h5M.5 7.500h5v4M7.500 7v4.500" fill="#dcdcdc" stroke="#a2a2a2" />
  </Svg>
);

const HouseIcon = ({ kind }: { kind: "3d" | "elevation" }) => (
  <Svg w={12} h={12}>
    {kind === "3d" ? (
      <>
        <path d="M.5 6.500L6 1l5.500 5.500M2 5.500v6h8v-6" fill="#ddd" stroke="#8e8e8e" />
        <path d="M2.500 7L6 3.500 9.500 7" stroke="#aaa" />
        <rect x="5" y="7" width="2" height="4" fill="#e5c07a" stroke="none" />
      </>
    ) : (
      <>
        <path d="M.5 6.500L6 1l5.500 5.500z" fill="#777" stroke="#777" />
        <path d="M2.500 6.500h7v5h-7z" fill="#ddd" stroke="#777" />
        <path d="M6 8v3.500" stroke="#777" strokeWidth="1.5" />
      </>
    )}
  </Svg>
);

const viewTabs = [
  { name: "Level 1", icon: <SheetIcon /> },
  { name: "{3D}", icon: <HouseIcon kind="3d" /> },
  { name: "{3D}", icon: <HouseIcon kind="3d" /> },
  { name: "East1", icon: <HouseIcon kind="elevation" /> },
  { name: "Level 15", icon: <SheetIcon /> },
  { name: "North", icon: <HouseIcon kind="elevation" />, active: true },
];

const ViewTabs = () => (
  <div className="flex h-4 bg-[#cbcbcb] text-[9px] text-[#4f4f4f]">
    {viewTabs.map((tab, i) => (
      <button
        key={i}
        type="button"
        className={clsx(
          "flex items-center pt-px pl-[3px] w-24 shrink-0",
          tab.active && "bg-white font-bold text-[#3c3c3c]"
        )}
      >
        <span className="w-[17px]">{tab.icon}</span>
        {tab.name}
        {tab.active && <span className="mr-1 ml-auto"><CloseX /></span>}
      </button>
    ))}
    <button type="button" aria-label="Open views" className="pr-[3px] ml-auto">
      <Svg w={7} h={6}>
        <path d="M0 .5h7" stroke="#666" />
        <path d="M.5 2.500h6l-3 3z" fill="#666" stroke="none" />
      </Svg>
    </button>
  </div>
);

const NavigationBar = () => (
  <div className="flex absolute right-px top-0.5 flex-col items-center pt-[13px] h-[88px] border-2 w-[26px] rounded-[4px] border-[#c9c9c9] bg-[#f3f3f3]">
    <span className="absolute top-0.5 right-0.5">
      <Svg w={6} h={6}><circle cx="3" cy="3" r="2.4" stroke="#aaa" /><path d="M2 2l2 2M4 2L2 4" stroke="#aaa" strokeWidth=".8" /></Svg>
    </span>
    <button type="button" aria-label="Steering wheel 2D">
      <Svg w={18} h={18}>
        <path d="M7.500 1H14v7c0 4-3 6.500-6.500 6.500S1 11.500 1 8s3-7 6.500-7z" fill="#e2e6ea" stroke="#9aa3aa" />
        <circle cx="7.500" cy="7.500" r="3.5" fill="#fff" stroke="#9aa3aa" />
        <text x="9" y="17" fontSize="7" fontWeight="700" fill="#3f7fb5" stroke="none">2D</text>
      </Svg>
    </button>
    <span className="mt-[3px]"><Caret color="#888" /></span>
    <span className="mt-[3px] w-5 h-px bg-[#cfcfcf]" />
    <button type="button" aria-label="Zoom in region" className="mt-1.5">
      <Svg w={13} h={13}>
        <rect x=".5" y=".5" width="8" height="8" fill="#a9cf9a" stroke="#8fb981" />
        <circle cx="8" cy="8" r="2.5" fill="#fff" stroke="#888" />
        <path d="M10 10l2.500 2.500" stroke="#888" />
      </Svg>
    </button>
    <span className="mt-1.5"><Caret color="#888" /></span>
    <span className="absolute right-0.5 bottom-0.5">
      <Svg w={6} h={6}><circle cx="3" cy="3" r="2.4" stroke="#aaa" /><path d="M1.500 3h3" stroke="#aaa" /></Svg>
    </span>
  </div>
);

const bulb = (
  <>
    <circle cx="10" cy="8.5" r="2.5" fill="#56c4cc" stroke="none" />
    <path d="M9 12h2" stroke="#555" />
  </>
);

const viewControls: { label: string; icon: ReactNode }[] = [
  { label: "Detail level", icon: <rect x=".5" y="2.500" width="12" height="8" fill="#fff" stroke="#777" /> },
  {
    label: "Visual style",
    icon: <path d="M1.500 4.500l3-3h7v7l-3 3h-7zM1.500 4.500h7v7M8.500 4.500l3-3" fill="#fff" stroke="#777" />,
  },
  {
    label: "Sun path",
    icon: (
      <>
        <circle cx="5.500" cy="5.500" r="3" fill="#f9a81f" stroke="none" />
        <path d="M5.500 0v2M5.500 9v2M0 5.500h2M1.500 1.500L3 3M9.500 1.500L8 3M1.500 9.500L3 8" stroke="#f9a81f" />
        {bulb}
      </>
    ),
  },
  {
    label: "Shadows",
    icon: (
      <>
        <circle cx="5.500" cy="5" r="4" fill="#eee" stroke="#999" />
        <path d="M0 11.500h8M1 9.500h5" stroke="#999" />
        {bulb}
      </>
    ),
  },
  {
    label: "Crop view",
    icon: (
      <>
        <path d="M3.500 12.500v-9H13M10.500 1v5" stroke="#777" strokeWidth="1.3" />
        <path d="M0 9.500h3M3.500 0v3" stroke={B} strokeWidth="1.3" />
        <path d="M7 7.500l4.500 4.500M11.500 7.500L7 12" stroke="#e03c31" strokeWidth="1.6" />
      </>
    ),
  },
  {
    label: "Crop region",
    icon: (
      <>
        <path d="M3.500 12.500v-9H13M10.500 1v4" stroke="#777" strokeWidth="1.3" />
        <path d="M0 9.500h6M3.500 0v3" stroke={B} strokeWidth="1.3" />
        {bulb}
      </>
    ),
  },
  {
    label: "Hide or isolate",
    icon: (
      <>
        <circle cx="3" cy="8.500" r="1.9" stroke="#666" />
        <circle cx="8.500" cy="8.500" r="1.9" stroke="#666" />
        <path d="M2 6.500L5 3.500M8 6.500l4-3V8" stroke="#666" />
      </>
    ),
  },
  {
    label: "Reveal hidden",
    icon: (
      <>
        <circle cx="6.500" cy="5" r="3.2" fill="#56c4cc" stroke="none" />
        <path d="M5 9.500h3M5 11.500h3" stroke="#666" strokeWidth="1.5" />
      </>
    ),
  },
  {
    label: "Temporary properties",
    icon: (
      <>
        <path d="M2 9.500v-7h7l2 2V7M2 9.500h4M3.500 4.500h5M3.500 6.500h3" stroke="#777" />
        <path d="M7 7.500h4.500V12H7z" stroke="#666" strokeDasharray="2 1" />
      </>
    ),
  },
  {
    label: "Reveal constraints",
    icon: (
      <>
        <path d="M1.500 1v11M12 1v4M1.500 3h10.500M3.500 1.500L2 3l1.500 1.500M10 1.500L11.500 3 10 4.500" stroke="#666" />
        <path d="M1.500 10H7" stroke="#666" strokeDasharray="2 1" />
        {bulb}
      </>
    ),
  },
];

const ViewControlBar = () => (
  <div className="flex items-center mb-0.5 h-[13px] bg-[#f3f3f3] text-[9px] text-[#4c4c4c]">
    <button type="button" className="pl-[19px] w-[60px] text-left whitespace-nowrap">1 : 100</button>
    {viewControls.map((item) => (
      <button key={item.label} type="button" aria-label={item.label} className="flex justify-center w-[19px] shrink-0 odd:w-5">
        <Svg w={13} h={13}>{item.icon}</Svg>
      </button>
    ))}
    <div className="flex flex-1 justify-between items-center h-full bg-[#e9e9e9]">
      <span className="flex justify-center items-center w-[13px] h-full bg-[#f0f0f0]"><Chevron dir="left" /></span>
      <span className="w-3 h-1 rounded-sm bg-[#cdcdcd]" />
      <span className="flex justify-center items-center w-[13px] h-full bg-[#f0f0f0]"><Chevron dir="right" /></span>
    </div>
    <span className="flex justify-center items-center w-[13px]">
      <Svg w={6} h={6}><path d="M4 1h1.500M0 4.500h1.500M4 4.500h1.500" stroke="#777" strokeWidth="1.5" /></Svg>
    </span>
  </div>
);

const ViewArea = () => (
  <main className="flex flex-col flex-1 bg-white">
    <ViewTabs />
    <div className="flex flex-1">
      <div className="relative flex-1 pt-[23px] pl-[155px]">
        <Elevation />
        <NavigationBar />
      </div>
      <div className="flex flex-col items-center w-[13px] bg-[#e9e9e9]">
        <span className="flex justify-center items-center w-full h-[13px] bg-[#f0f0f0]"><Chevron dir="up" /></span>
        <span className="my-auto w-1 h-3 rounded-sm bg-[#cdcdcd]" />
        <span className="flex justify-center items-center w-full h-[13px] bg-[#f0f0f0]"><Chevron /></span>
      </div>
    </div>
    <ViewControlBar />
  </main>
);

/* ---------- status bar ---------- */

const cursor = <path d="M6.500 5v7l1.700-1.500 1 2 1.200-.6-1-1.900h2.100z" fill="#fff" stroke="#555" strokeWidth=".8" />;

const selectionTools: { label: string; icon: ReactNode }[] = [
  {
    label: "Select links",
    icon: <><path d="M5.500 4H2a1 1 0 0 1 0-2.500h3.500M7 1.500h3.500a1 1 0 0 1 0 2.500H7M4 2.700h4.500" stroke="#e8a070" />{cursor}</>,
  },
  {
    label: "Select underlay elements",
    icon: <><path d="M1 6l3-3h4L6 6zM1 9l3-2.500" fill="#7fbce6" stroke="#5aa5dc" /><path d="M8.500 1l3.500 4M12 1L8.500 5" stroke="#e03c31" strokeWidth="1.5" />{cursor}</>,
  },
  {
    label: "Select pinned elements",
    icon: <><path d="M3 1.500h5M4 1.500v3l-1.500 2h6L7 4.500v-3M5.500 6.500V10" stroke="#777" />{cursor}</>,
  },
  {
    label: "Select by face",
    icon: <><path d="M1 3l3-2h3v9l-2 2H1z" fill="#5ba6da" stroke="#4b94c8" /><path d="M8.500 1l3.500 4M12 1L8.500 5" stroke="#e03c31" strokeWidth="1.5" />{cursor}</>,
  },
  {
    label: "Drag elements on selection",
    icon: <><path d="M5.500 1v9M1 5.500h9M4 2.500L5.500 1 7 2.500M2.500 4L1 5.500 2.500 7M8.500 4L10 5.500" stroke="#555" />{cursor}</>,
  },
  {
    label: "Background processes",
    icon: <circle cx="6.500" cy="6.500" r="4.5" stroke="#b5b5b5" strokeWidth="1.6" strokeDasharray="2 1.500" />,
  },
];

const StatusBar = () => (
  <footer className="flex items-center h-[18px] bg-[#f3f3f3] text-[9px] text-[#4c4c4c]">
    <span className="pl-px w-[255px]">Ready</span>
    <Svg w={13} h={13}>
      <path d="M1 2l3-1v7l-2 1-1-2z" fill="#3d8fd1" stroke="none" />
      <path d="M6 1.500L9 1l1 1v5H8V3H6z" fill="#d9703c" stroke="none" />
      <path d="M3.500 5.500l2.500-1 3 1v5.500l-3 1.500-2.500-1z" fill="#4db474" stroke="#2c8d4b" strokeWidth=".6" />
      <path d="M9 9l1.500-2L12 9.500l-2 1" stroke="#3d8fd1" strokeWidth="1.3" />
    </Svg>
    <div className="flex items-center ml-[150px] text-[#999]">
      <Chevron />
      <button type="button" className="flex items-center ml-2">
        <Svg w={13} h={12}>
          <path d="M1 10.500h7.500M2 10.500V8.500h5.500v2M3 8.500L3.500 5h3L7 8.500M5.500 3.500V1h5.500v3H7.500" stroke="#999" />
        </Svg>
        :0
      </button>
    </div>
    <button type="button" aria-label="Design options" className="ml-[18px]">
      <Svg w={12} h={12}>
        <rect x=".5" y=".5" width="11" height="11" fill="#fff" stroke="#666" />
        <path d="M0 1.500h12" stroke="#666" strokeWidth="2" />
        <path d="M2 4.500h1.500M5 4.500h5M2 7h1.500M5 7h5M2 9.500h1.500M5 9.500h5" stroke="#666" />
      </Svg>
    </button>
    <button type="button" disabled aria-label="Add to option set" className="ml-2">
      <Svg w={13} h={12}>
        <path d="M2.500 7V.5h10v8H8M4.500 3h1M7 3h4M4.500 5.500h1M7 5.500h4M.5 9.500h6M5 7.500l2 2-2 2" stroke="#999" />
      </Svg>
    </button>
    <button type="button" disabled className="flex justify-between items-center ml-2 w-[150px] text-[#a5a5a5]">
      Main Model
      <Chevron />
    </button>
    <div className="flex items-center pr-[54px] ml-auto">
      {selectionTools.map((tool) => (
        <button key={tool.label} type="button" aria-label={tool.label} className="flex justify-center w-[19px] mr-px last:mr-0">
          <Svg w={13} h={13}>{tool.icon}</Svg>
        </button>
      ))}
      <button type="button" className="flex items-center">
        <Svg w={13} h={12}>
          <path d="M1 1h11L8 6v5l-3-1.500V6z" fill="#bbb" stroke="#777" />
        </Svg>
        :0
      </button>
    </div>
  </footer>
);

/* ---------- windows taskbar ---------- */

const TaskApp = ({ label, active, children }: { label: string; active?: boolean; children: ReactNode }) => (
  <button
    type="button"
    aria-label={label}
    className={clsx(
      "flex justify-center items-center h-full border-b-2 border-[#76b0e6]",
      active ? "w-9 bg-[#4a5c68]" : "w-[30px] mx-[3px]"
    )}
  >
    {children}
  </button>
);

const Taskbar = () => (
  <div className="flex items-center h-[30px] text-[9px] text-white bg-linear-to-r from-[#20353f] to-[#1b2944]">
    <button type="button" aria-label="Start" className="flex justify-center w-9">
      <Svg w={12} h={12}>
        <path d="M0 1.700L5 1v4.700H0zM5.700 .9L12 0v5.700H5.700zM0 6.400h5v4.700l-5-.7zM5.700 6.400H12V12l-6.300-.9z" fill="#fff" stroke="none" />
      </Svg>
    </button>
    <label className="flex gap-2 items-center px-2 h-full border w-[258px] border-[#c4c4c4] bg-[#f2f2f2]">
      <Svg w={13} h={13}>
        <circle cx="8" cy="4.500" r="4" stroke="#444" />
        <path d="M5 7.500l-4.500 4.500" stroke="#444" strokeWidth="1.2" />
      </Svg>
      <input
        type="text"
        aria-label="Type here to search"
        placeholder="Type here to search"
        className="flex-1 text-[10px] outline-none placeholder:text-[#4c4c4c]"
      />
    </label>
    <button type="button" aria-label="Cortana" className="flex justify-center w-9">
      <Svg w={12} h={12}><circle cx="6" cy="6" r="4.8" stroke="#e6eaee" strokeWidth="1.8" /></Svg>
    </button>
    <button type="button" aria-label="Task view" className="flex justify-center w-9">
      <Svg w={13} h={12}>
        <path d="M1.500 0v2.500h6V0M1.500 12V9.500h6V12M1.500 2.500v7M7.500 2.500v7M10.500 0v3M10.500 6v6" stroke="#dde2e6" />
        <path d="M9.500 3.500h2v2h-2z" fill="#dde2e6" stroke="none" />
      </Svg>
    </button>
    <div className="flex gap-px h-full ml-0.5">
      <TaskApp label="File Explorer">
        <Svg w={17} h={15}>
          <path d="M.5 1h5L7 3h9v10H.5z" fill="#e9ae35" stroke="none" />
          <path d="M.5 4.500H16V13H.5z" fill="#fbd05b" stroke="none" />
          <path d="M3.500 14V8h10v6h-3v-3h-4v3z" fill="#3d8fd1" stroke="none" />
        </Svg>
      </TaskApp>
      <TaskApp label="Revit" active>
        <Svg w={16} h={18}>
          <path d="M1 1h13l2 2v15H2l-1-2z" fill="#0a37a5" stroke="none" />
          <path d="M1 1h13v11H1z" fill="#1b63f2" stroke="none" />
          <text x="4.500" y="10" fontSize="9" fontWeight="700" fill="#fff" stroke="none">R</text>
          <text x="4.500" y="16.500" fontSize="4" fontWeight="700" fill="#fff" stroke="none">RVT</text>
        </Svg>
      </TaskApp>
      <TaskApp label="Photos">
        <Svg w={17} h={17}>
          <rect x=".5" y=".5" width="16" height="16" fill="#1c2b36" stroke="#fff" />
          <path d="M1 16v-4l5-6 4 5 2-2 4 5v2z" fill="#fff" stroke="none" />
        </Svg>
      </TaskApp>
      <TaskApp label="Paint">
        <Svg w={18} h={17}>
          <path d="M8 3C3 3 .5 6.500 .5 10s3 6 6 6 2-3 4-3.500 5 0 5-4S12 3 8 3z" fill="#d5e8f4" stroke="#8ba9be" strokeWidth=".6" />
          <circle cx="4" cy="10" r="1.4" fill="#3fa866" stroke="none" />
          <circle cx="6" cy="6.500" r="1.4" fill="#e03c31" stroke="none" />
          <circle cx="10" cy="5.500" r="1.3" fill="#f9a81f" stroke="none" />
          <circle cx="6.500" cy="13" r="1.3" fill="#3d8fd1" stroke="none" />
          <path d="M15 4l-4.500 11" stroke="#c78643" strokeWidth="1.8" />
          <path d="M15 4l1.500-3" stroke="#8a5a2b" strokeWidth="3" />
        </Svg>
      </TaskApp>
    </div>

    <div className="flex items-center ml-auto h-full">
      <Cell className="w-[18px]" label="Show hidden icons">
        <Svg w={9} h={6}><path d="M.5 5l4-4 4 4" stroke="#fff" /></Svg>
      </Cell>
      <Cell className="w-[18px]" label="Battery">
        <Svg w={13} h={9}>
          <path d="M4.500 2.500h7v5h-8" stroke="#fff" />
          <path d="M5.500 4h5v2h-5z" fill="#fff" stroke="none" />
          <path d="M1 0v2M3 0v2M.5 2.500h3v2h-3zM2 4.500v3h2M12.500 4v2" stroke="#fff" strokeWidth=".9" />
        </Svg>
      </Cell>
      <Cell className="w-[18px]" label="Network">
        <Svg w={13} h={13}>
          <circle cx="6" cy="6" r="5" stroke="#fff" />
          <path d="M1 6h10M6 1v10M2 3.500h8M2 8.500h8M6 1c-3 3-3 7 0 10M6 1c3 3 3 7 0 10" stroke="#fff" strokeWidth=".7" />
          <circle cx="9.500" cy="9.500" r="2.5" fill="#1b2944" stroke="#fff" />
          <path d="M8 8l3 3" stroke="#fff" strokeWidth=".8" />
        </Svg>
      </Cell>
      <Cell className="w-[18px]" label="Muted">
        <Svg w={12} h={9}>
          <path d="M.5 3h2l3-2.500v8L2.500 6h-2zM7.500 3l3.500 3.500M11 3L7.500 6.500" stroke="#fff" strokeWidth=".9" />
        </Svg>
      </Cell>
      <span className="ml-[5px] w-5">ENG</span>
      <span className="w-[58px] leading-[14px] text-center">
        10:58 PM
        <br />
        6/10/2023
      </span>
      <Cell className="w-7 ml-0.5" label="1 new notification">
        <Svg w={20} h={20}>
          <path d="M2 2h12v9H8l-3 3v-3H2z" fill="#fff" stroke="none" />
          <path d="M4 4.500h8M4 6.500h8M4 8.500h5" stroke="#1b2944" strokeWidth=".8" />
          <circle cx="14" cy="13.500" r="5" fill="#2b3540" stroke="#6a7483" />
          <text x="11.500" y="17" fontSize="9" fill="#fff" stroke="none">1</text>
        </Svg>
      </Cell>
      <span className="mr-0.5 ml-1 w-px h-full bg-[#5d6980]" />
    </div>
  </div>
);

const App = () => (
  <div className="flex flex-col min-h-screen overflow-hidden bg-[#d8d8d8] font-['Open_Sans','Noto_Sans',sans-serif] leading-[12px]">
    <TitleBar />
    <RibbonTabs />
    <Ribbon />
    <div className="h-5 bg-[#f5f5f5] border-b border-[#c4c4c4]" />
    <div className="flex flex-1">
      <aside className="flex flex-col border-r-2 w-[166px] shrink-0 border-[#c9c9c9]">
        <Properties />
        <ProjectBrowser />
      </aside>
      <ViewArea />
    </div>
    <StatusBar />
    <Taskbar />
  </div>
);

export default App;
